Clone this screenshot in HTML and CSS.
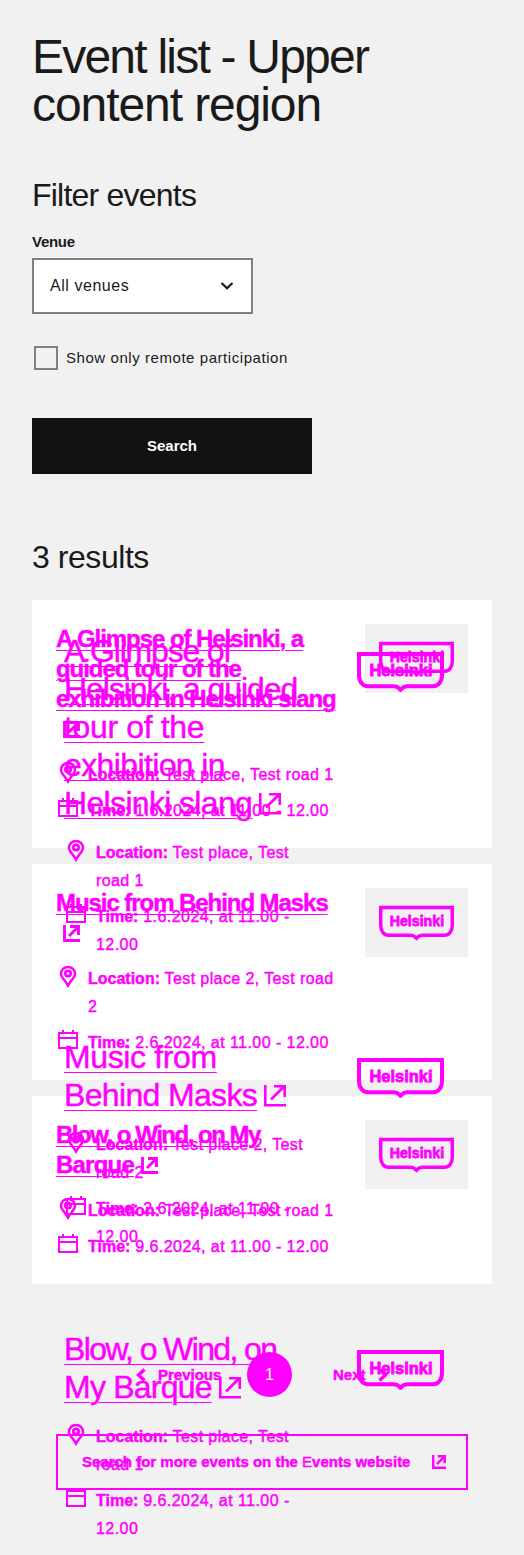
FILE: index.html
```html
<!DOCTYPE html>
<html lang="en">
<head>
<meta charset="utf-8">
<title>Event list</title>
<link rel="stylesheet" href="styles.css">
</head>
<body>
<main class="page">
  <h1><span class="k18">Event list - Upper</span><br><span class="k11">content region</span></h1>
  <h2 class="k8">Filter events</h2>
  <form class="filters">
    <label class="label">Venue</label>
    <div class="select"><span>All venues</span><svg width="14" height="10" viewBox="0 0 14 10"><path d="M1.500 2L7 7.300 12.500 2" fill="none" stroke="#1a1a1a" stroke-width="2.200"/></svg></div>
    <div class="check"><i class="box"></i><span>Show only remote participation</span></div>
    <button class="search" type="button">Search</button>
  </form>
  <h2 class="results k45">3 results</h2>
  <section class="listing">
    <div class="cards">
      <article class="card">
        <div class="body">
          <h3><a>A Glimpse of Helsinki, a<br>guided tour of the<br>exhibition in Helsinki slang</a><br><svg class="ext"><use href="#ext"/></svg></h3>
          <div class="row"><svg><use href="#pin"/></svg><p><b>Location:</b> Test place, Test road 1</p></div>
          <div class="row time"><svg><use href="#cal"/></svg><p><b>Time:</b> 1.6.2024, at 11.00 - 12.00</p></div>
        </div>
        <div class="thumb"><svg><use href="#logo"/></svg></div>
      </article>
      <article class="card">
        <div class="body">
          <h3><a>Music from Behind Masks</a><br><svg class="ext"><use href="#ext"/></svg></h3>
          <div class="row"><svg><use href="#pin"/></svg><p><b>Location:</b> Test place 2, Test road<br>2</p></div>
          <div class="row time"><svg><use href="#cal"/></svg><p><b>Time:</b> 2.6.2024, at 11.00 - 12.00</p></div>
        </div>
        <div class="thumb"><svg><use href="#logo"/></svg></div>
      </article>
      <article class="card">
        <div class="body">
          <h3><a><span class="k15">Blow, o Wind, on My</span><br><span class="k8">Barque</span></a><svg class="ext"><use href="#ext"/></svg></h3>
          <div class="row"><svg><use href="#pin"/></svg><p><b>Location:</b> Test place, Test road 1</p></div>
          <div class="row time"><svg><use href="#cal"/></svg><p><b>Time:</b> 9.6.2024, at 11.00 - 12.00</p></div>
        </div>
        <div class="thumb"><svg><use href="#logo"/></svg></div>
      </article>
    </div>
    <nav class="pager">
      <span class="prev"><svg width="10" height="14" viewBox="0 0 10 14"><path d="M8.500 1.500L2.500 7l6 5.500" fill="none" stroke="currentColor" stroke-width="3.400"/></svg>Previous</span>
      <span class="current">1</span>
      <span class="next">Next<svg width="10" height="14" viewBox="0 0 10 14"><path d="M1.500 1.500L7.500 7l-6 5.500" fill="none" stroke="currentColor" stroke-width="3.400"/></svg></span>
    </nav>
    <a class="more"><span>Search for more events on the <span class="thin">E</span>vents website</span><svg width="14" height="14"><use href="#ext"/></svg></a>
    <div class="overlay">
      <article class="item">
        <div class="body">
          <h3><a><span class="k125">A Glimpse of</span><br><span class="k11">Helsinki, a guided</span><br><span class="k4">tour of the</span><br><span class="k6">exhibition in</span><br><span class="k65">Helsinki slang</span></a><svg class="ext"><use href="#extThin"/></svg></h3>
          <div class="row"><svg><use href="#pin"/></svg><p><b>Location:</b> Test place, Test<br>road 1</p></div>
          <div class="row time"><svg><use href="#cal"/></svg><p><b>Time:</b> 1.6.2024, at 11.00 -<br>12.00</p></div>
        </div>
        <svg class="logo"><use href="#logo"/></svg>
      </article>
      <article class="item">
        <div class="body">
          <h3><a><span class="k4">Music from</span><br><span class="k65">Behind Masks</span></a><svg class="ext"><use href="#extThin"/></svg></h3>
          <div class="row"><svg><use href="#pin"/></svg><p><b>Location:</b> Test place 2, Test<br>road 2</p></div>
          <div class="row time"><svg><use href="#cal"/></svg><p><b>Time:</b> 2.6.2024, at 11.00 -<br>12.00</p></div>
        </div>
        <svg class="logo"><use href="#logo"/></svg>
      </article>
      <article class="item">
        <div class="body">
          <h3><a><span class="k17">Blow, o Wind, on</span><br><span class="k8">My Barque</span></a><svg class="ext"><use href="#extThin"/></svg></h3>
          <div class="row"><svg><use href="#pin"/></svg><p><b>Location:</b> Test place, Test<br>road 1</p></div>
          <div class="row time"><svg><use href="#cal"/></svg><p><b>Time:</b> 9.6.2024, at 11.00 -<br>12.00</p></div>
        </div>
        <svg class="logo"><use href="#logo"/></svg>
      </article>
    </div>
  </section>
</main>
<svg class="defs" width="0" height="0">
  <symbol id="pin" viewBox="0 0 24 24"><path d="M12 2.900a7 7 0 0 0-7 7c0 3.300 3.500 5.600 7 11.600 3.500-6 7-8.300 7-11.600a7 7 0 0 0-7-7z" fill="none" stroke="currentColor" stroke-width="2.500"/><circle cx="12" cy="9.500" r="2.700" fill="none" stroke="currentColor" stroke-width="2.700"/></symbol>
  <symbol id="cal" viewBox="0 0 24 24"><path d="M3 5h18v15H3zM3 10h18M7 2v3M17 2v3" fill="none" stroke="currentColor" stroke-width="2"/></symbol>
  <symbol id="ext" viewBox="0 0 17 17"><path d="M1.500 0v15.500H17M6 11L15 2M7 1.500h8.500V10" fill="none" stroke="currentColor" stroke-width="2.900"/></symbol>
  <symbol id="extThin" viewBox="0 0 22 22"><path d="M1.300 0v20.200H22M7 14.500L20 1.500M10 1.300h10.700V12" fill="none" stroke="currentColor" stroke-width="2.600"/></symbol>
  <symbol id="logo" viewBox="0 0 87 40"><path d="M2 2h83v21c0 7-4 11.300-9 11.300H50c-4 0-4 1-6.500 3.500-2.500-2.500-2.500-3.500-6.500-3.500H11c-5 0-9-4.300-9-11.300z" fill="none" stroke="currentColor" stroke-width="4"/><text x="12.500" y="24" textLength="63" lengthAdjust="spacingAndGlyphs" class="logo-text">Helsinki</text></symbol>
</svg>
</body>
</html>
```
FILE: styles.css
```css
* { box-sizing: border-box; }
body { margin: 0; background: #f1f1f1; color: #1a1a1a; font-family: "Liberation Sans", Arial, sans-serif; font-size: 16px; }
h1, h2, h3, p { margin: 0; font-weight: 400; }
svg { display: block; flex: none; }
.defs { position: absolute; }
.page { height: 1555px; padding: 33px 32px 0; overflow: hidden; }
h1 { font-size: 48px; line-height: 48px; white-space: nowrap; }
h2 { font-size: 32px; line-height: 38px; margin-top: 47px; }

/* tracking steps */
.k4 { letter-spacing: -.36px; }
.k45 { letter-spacing: -.45px; }
.k6 { letter-spacing: -.62px; }
.k65 { letter-spacing: -.66px; }
.k8 { letter-spacing: -.78px; }
.k11 { letter-spacing: -1.08px; }
.k125 { letter-spacing: -1.2px; }
.k15 { letter-spacing: -1.49px; }
.k17 { letter-spacing: -1.62px; }
.k18 { letter-spacing: -1.78px; }

.filters { margin-top: 16px; }
.label { display: block; font-size: 15px; font-weight: 700; line-height: 24px; letter-spacing: -.3px; }
.select { display: flex; align-items: center; justify-content: space-between; width: 221px; height: 56px; margin-top: 4px; padding: 0 17px 0 16px; border: 2px solid #808080; background: #fff; letter-spacing: .55px; }
.check { display: flex; align-items: center; gap: 8px; height: 24px; margin: 32px 0 0 2px; font-size: 15px; letter-spacing: .56px; }
.check span { padding-bottom: 2px; }
.box { width: 24px; height: 24px; border: 2px solid #808080; }
.search { display: block; width: 280px; height: 56px; margin-top: 48px; padding: 0 0 2px; border: 0; background: #121212; color: #fff; font: 700 15px "Liberation Sans", Arial, sans-serif; }
.results { margin-top: 64px; }

.listing { position: relative; margin-top: 24px; white-space: nowrap; }
.body, .thumb, .logo, .pager, .more { color: #f0f; }
.body, .pager, .more { -webkit-text-stroke: .45px #f0f; }
.cards { display: flex; flex-direction: column; gap: 16px; }
.card { display: flex; justify-content: space-between; align-items: flex-start; padding: 24px; background: #fff; }
h3 { margin-bottom: 16px; }
h3 a { text-decoration: underline; text-decoration-thickness: 1px; }
.card h3 { font-size: 24px; line-height: 30px; font-weight: 700; letter-spacing: -1.06px; }
.card h3 a { text-underline-offset: 3px; }
.ext { display: inline-block; margin-left: 7px; vertical-align: -1px; width: 17px; height: 17px; }
.row { display: flex; gap: 8px; line-height: 28px; letter-spacing: .4px; }
.row svg { width: 24px; height: 24px; }
.row p { padding-top: 1px; margin-bottom: -1px; }
.row + .row { margin-top: 8px; }
.time { letter-spacing: .44px; }
.row b { letter-spacing: 0; }
.thumb { display: flex; justify-content: center; width: 103px; height: 69px; padding-top: 17px; background: #f1f1f1; }
.thumb svg { width: 75px; height: 36px; }
.logo-text { font: 700 17px "Liberation Sans", Arial, sans-serif; fill: currentColor; stroke: currentColor; stroke-width: .9px; }

.pager { display: flex; align-items: center; height: 45px; margin-top: 68px; padding-left: 104px; font-size: 15px; font-weight: 700; }
.prev { display: flex; align-items: center; gap: 12px; width: 111px; }
.current { display: flex; align-items: center; justify-content: center; width: 45px; height: 45px; border-radius: 50%; background: #f0f; color: #fff; font-size: 16px; font-weight: 400; -webkit-text-stroke: 0; }
.next { display: flex; align-items: center; gap: 12px; margin-left: 41px; }
.more { display: flex; align-items: center; justify-content: space-between; height: 56px; margin: 37px 24px 0; padding: 0 20px 0 24px; border: 2px solid #f0f; font-size: 15px; font-weight: 700; }
.more > span { padding-bottom: 2px; }
.thin { font-weight: 400; }

/* second list floats over the cards */
.overlay { position: absolute; left: 32px; top: 32px; width: 380px; display: flex; flex-direction: column; gap: 80px; }
.item { display: flex; justify-content: space-between; }
.item h3 { font-size: 32px; line-height: 38px; }
.item h3 a { text-underline-offset: 4px; }
.item .ext { width: 22px; height: 22px; }
.logo { width: 87px; height: 40px; margin-top: 20px; }
```
